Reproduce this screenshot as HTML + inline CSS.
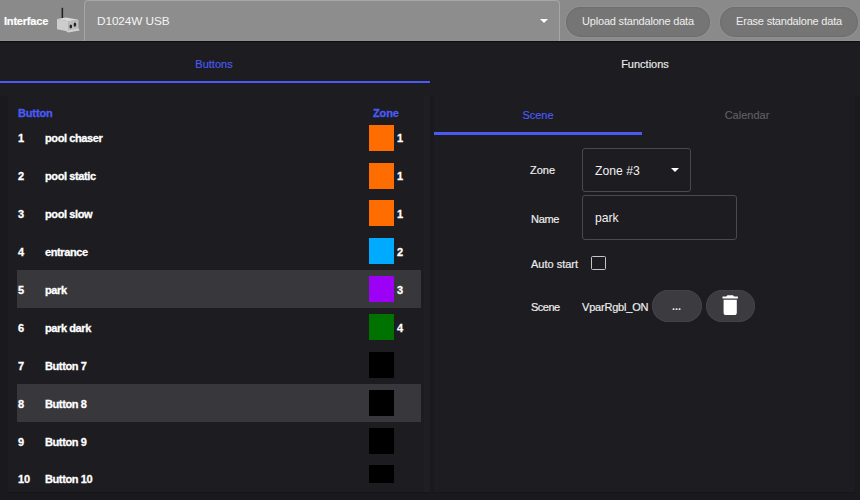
<!DOCTYPE html>
<html><head><meta charset="utf-8">
<style>
*{box-sizing:border-box;margin:0;padding:0}
html,body{width:860px;height:500px;overflow:hidden;background:#1a191e;font-family:"Liberation Sans",sans-serif;color:#fff}
.abs{position:absolute;white-space:nowrap}
#top{position:absolute;left:0;top:0;width:860px;height:41px;background:#8a8a8a;border-bottom:1px solid #919191;box-shadow:0 1px 1px rgba(0,0,0,0.5);z-index:2}
#iface{position:absolute;left:4px;top:15px;font-size:11px;font-weight:bold;color:#fff;letter-spacing:-0.2px;-webkit-text-stroke:0.2px #fff}
#sel{position:absolute;left:84px;top:0px;width:476px;height:41px;border:1px solid #a6a6a6;border-bottom:none;border-radius:4px 4px 0 0;background:#8d8d8d}
#sel span{position:absolute;left:12px;top:12.5px;font-size:11.8px;color:#f4f4f4;letter-spacing:-0.1px}
.caret{position:absolute;width:0;height:0;border-left:4px solid transparent;border-right:4px solid transparent;border-top:4.5px solid #fff}
.pill{position:absolute;top:6.7px;height:30.5px;border-radius:15.5px;background:#757575;color:#eeeeee;font-size:11px;text-align:center;line-height:29px;letter-spacing:-0.2px;box-shadow:0 0 0 1.5px rgba(150,150,150,0.35), inset 0 0 1px 1px rgba(100,100,100,0.4)}
.tab{position:absolute;font-size:11px;text-align:center;-webkit-text-stroke:0.15px currentColor}
.panel{position:absolute;background:#1d1c21;box-shadow:0 1px 1px rgba(0,0,0,0.15)}
.row{position:absolute;left:17px;width:404px;height:37.8px;font-size:11px;font-weight:bold;-webkit-text-stroke:0.3px #fff}
.row .n{position:absolute;left:1px;top:14.6px;line-height:11px}
.row .t{position:absolute;left:28px;top:14.6px;line-height:11px;letter-spacing:-0.4px}
.row .sw{position:absolute;left:352px;top:6px;width:25.3px;height:26px}
.row .z{position:absolute;left:380px;top:14.6px;line-height:11px}
.hl{background:#38373c}
.lbl{position:absolute;font-size:11px;color:#ececec;white-space:nowrap;-webkit-text-stroke:0.2px #ececec}
.box{position:absolute;border:1px solid #4a494f;border-radius:3px}
.btn2{position:absolute;top:290px;height:32px;border-radius:16px;background:#3c3b40;box-shadow:inset 0 0 0 1px #434247}
</style></head><body>
<div id="top">
  <div id="iface">Interface</div>
  <svg class="abs" style="left:52px;top:4px" width="32" height="32" viewBox="52 4 32 32">
    <rect x="61.6" y="7.8" width="1.5" height="11" fill="#1e1e1e"/>
    <path d="M57 19 L66 17.5 L78.5 19.8 L68.5 21.2 Z" fill="#dadada"/>
    <path d="M57 19 L68.5 21.2 L68.5 31.5 L57 29.3 Z" fill="#cdcdcd"/>
    <path d="M68.5 21.2 L78.5 19.8 L78.5 29 L68.5 31.5 Z" fill="#bdbdbd"/>
    <path d="M66 31 L79 28.5 L79.5 30.5 L68 32.5 Z" fill="#d2d2d2"/>
    <ellipse cx="70.8" cy="26.4" rx="1.3" ry="2" fill="#262626"/>
    <ellipse cx="74.9" cy="24.7" rx="1.3" ry="2.1" fill="#262626"/>
  </svg>
  <div id="sel"><span>D1024W USB</span><div class="caret" style="left:455px;top:18px"></div></div>
  <div class="pill" style="left:566px;width:144px">Upload standalone data</div>
  <div class="pill" style="left:720px;width:138px">Erase standalone data</div>
</div>

<div class="abs" style="left:0;top:40px;width:860px;height:56px;background:#1d1c21"></div>
<div class="tab" style="left:0;top:58px;width:428px;color:#4a5bf5">Buttons</div>
<div class="tab" style="left:430px;top:58px;width:430px;color:#ececec">Functions</div>
<div class="abs" style="left:0;top:81px;width:430px;height:2px;background:#4a5bf5"></div>

<div class="panel" style="left:7.5px;top:96px;width:422.5px;height:396px"></div>
<div class="abs" style="left:424px;top:96px;width:6px;height:396px;background:#1f1e23"></div>
<div class="panel" style="left:434px;top:96px;width:421px;height:396px"></div>

<div class="abs" style="left:18px;top:107px;font-size:11px;font-weight:bold;color:#4a5bf5;letter-spacing:-0.15px;-webkit-text-stroke:0.3px #4a5bf5">Button</div>
<div class="abs" style="left:373px;top:107px;font-size:11px;font-weight:bold;color:#4a5bf5;letter-spacing:-0.15px;-webkit-text-stroke:0.3px #4a5bf5">Zone</div>

<div class="abs" style="left:0;top:118px;width:430px;height:370px">
<div class="row" style="top:0.6px"><span class="n">1</span><span class="t">pool chaser</span><div class="sw" style="background:#ff6d00"></div><span class="z">1</span></div>
<div class="row" style="top:38.5px"><span class="n">2</span><span class="t">pool static</span><div class="sw" style="background:#ff6d00"></div><span class="z">1</span></div>
<div class="row" style="top:76.4px"><span class="n">3</span><span class="t">pool slow</span><div class="sw" style="background:#ff6d00"></div><span class="z">1</span></div>
<div class="row" style="top:114.4px"><span class="n">4</span><span class="t">entrance</span><div class="sw" style="background:#00aaff"></div><span class="z">2</span></div>
<div class="row hl" style="top:152.3px"><span class="n">5</span><span class="t">park</span><div class="sw" style="background:#9c00f5"></div><span class="z">3</span></div>
<div class="row" style="top:190.2px"><span class="n">6</span><span class="t">park dark</span><div class="sw" style="background:#007200"></div><span class="z">4</span></div>
<div class="row" style="top:228.2px"><span class="n">7</span><span class="t">Button 7</span><div class="sw" style="background:#000"></div></div>
<div class="row hl" style="top:266.1px"><span class="n">8</span><span class="t">Button 8</span><div class="sw" style="background:#000"></div></div>
<div class="row" style="top:304px"><span class="n">9</span><span class="t">Button 9</span><div class="sw" style="background:#000"></div></div>
<div class="row" style="top:341.4px"><span class="n">10</span><span class="t">Button 10</span><div class="sw" style="background:#000;height:17.5px"></div></div>
</div>

<div class="tab" style="left:434px;top:109px;width:208px;color:#4a5bf5">Scene</div>
<div class="tab" style="left:642px;top:109px;width:210px;color:#606064">Calendar</div>
<div class="abs" style="left:434px;top:132px;width:208px;height:3px;background:#4a5bf5"></div>

<div class="lbl" style="left:530px;top:164px">Zone</div>
<div class="box" style="left:582px;top:147.5px;width:109px;height:44px"><span style="position:absolute;left:12px;top:15px;font-size:12.2px;color:#f0f0f0">Zone #3</span><div class="caret" style="left:88px;top:19px"></div></div>
<div class="lbl" style="left:531px;top:212.5px;letter-spacing:-0.3px">Name</div>
<div class="box" style="left:582px;top:195px;width:155px;height:45px"><span style="position:absolute;left:12px;top:15px;font-size:12.2px;color:#f0f0f0">park</span></div>
<div class="lbl" style="left:531px;top:257.5px">Auto start</div>
<div class="abs" style="left:591px;top:255.5px;width:14.5px;height:14.5px;border:1.8px solid #c6c6c6;border-radius:1.5px"></div>
<div class="lbl" style="left:531px;top:301px;letter-spacing:-0.5px">Scene</div>
<div class="lbl" style="left:582px;top:301px;letter-spacing:-0.2px">VparRgbl_ON</div>
<div class="btn2" style="left:652px;width:50px"><span style="position:absolute;left:20px;top:10px;font-size:11px;color:#eee;font-weight:bold">...</span></div>
<div class="btn2" style="left:706px;width:49px"></div>
<svg class="abs" style="left:716.9px;top:292.2px" width="26.4" height="26.4" viewBox="0 0 24 24"><path fill="#fff" d="M6 19c0 1.1.9 2 2 2h8c1.1 0 2-.9 2-2V7H6v12zM19 4h-3.5l-1-1h-5l-1 1H5v2h14V4z"/></svg>
</body></html>
